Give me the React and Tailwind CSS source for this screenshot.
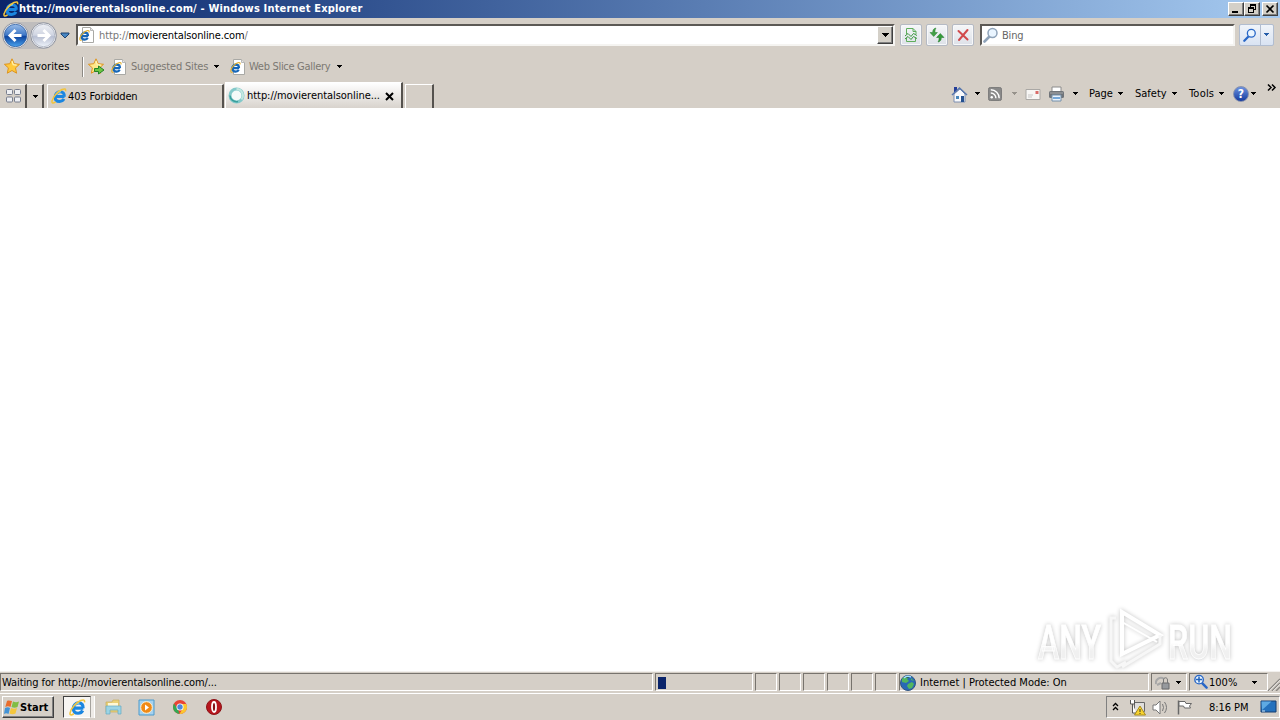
import React from 'react';

const Caret = ({ className = '', color = '#000' }) => (
  <svg className={`shrink-0 ${className}`} width="7" height="4" viewBox="0 0 7 4" shapeRendering="crispEdges">
    <path d="M1 0h5v1H1zM2 1h3v1H2zM3 2h1v1H3z" fill={color} />
  </svg>
);

const IeLogo = ({ size = 16, className = '' }) => (
  <svg className={`shrink-0 ${className}`} width={size} height={size} viewBox="0 0 16 16">
    <path d="M13.500 8.600H5.500M13.300 8.600C13.600 5.600 11.800 3.700 9.200 3.700 6.200 3.700 4.100 5.900 4.100 8.900c0 2.800 1.800 4.500 4.500 4.500 2 0 3.500-.9 4.300-2.500" fill="none" stroke="#1b86e0" strokeWidth="3" />
    <path d="M5 6.400C6 4.600 7.700 3.600 9.800 3.800" fill="none" stroke="#7dd4fb" strokeWidth="1.400" />
    <path d="M4.600 13.900C1.800 15.700.5 15.200 1.100 12.800 2 8.800 6.500 3.500 11 1.500c2.800-1.200 4.100-.6 3.500 1.700" fill="none" stroke="#f2c43c" strokeWidth="1.500" />
  </svg>
);

const PageIcon = ({ className = '' }) => (
  <svg className={`shrink-0 ${className}`} width="15" height="16" viewBox="0 0 15 16">
    <path d="M3.500.5h8l3 3v12h-11z" fill="#fff" stroke="#a9a9a5" />
    <path d="M11.500.5v3h3" fill="#e6e6e6" stroke="#b8b8b8" />
    <path d="M9.200 9.200H2.800M9 9c0-2-1.200-3.300-3.100-3.300S2.300 7.200 2.300 9.300s1.300 3.300 3.400 3.300c1.500 0 2.500-.6 3-1.800" fill="none" stroke="#1767b8" strokeWidth="2.200" />
    <path d="M2.600 13C-.2 14.300.5 10.500 2.700 7.700 4.500 5.300 7 3.700 8.800 3.500c1.300-.1 1.600.8 1 2" fill="none" stroke="#e5b02c" strokeWidth="1.100" />
  </svg>
);

const Star = ({ add, className = '' }) => (
  <svg className={`shrink-0 ${className}`} width="17" height="17" viewBox="0 0 17 17">
    <path d="M8 .8l2.200 4.900 5.300.6-4 3.600 1.100 5.300L8 12.500l-4.700 2.700 1.100-5.300-4-3.600 5.400-.6z" fill={add ? '#fde98a' : '#ffc93c'} stroke="#dd9420" />
    <path d="M8 3l1.200 3.700 3.500.5" fill="none" stroke="#fff3b4" strokeWidth="1.200" />
    {add && <path d="M6.500 10.500h4V8l5.500 4-5.500 4v-2.500h-4z" fill="#6cc643" stroke="#248324" />}
  </svg>
);

const NavCircle = ({ back }) => (
  <svg className="shrink-0" width="27" height="27" viewBox="0 0 27 27">
    <defs>
      <linearGradient id={back ? 'backFill' : 'forwardFill'} x1="0" y1="0" x2="0" y2="1">
        <stop offset="0" stopColor={back ? '#9bbde8' : '#eef0f5'} />
        <stop offset=".48" stopColor={back ? '#3f78c7' : '#d0d5e2'} />
        <stop offset=".55" stopColor={back ? '#0d449f' : '#b9c0d3'} />
        <stop offset="1" stopColor={back ? '#4ba4ee' : '#eef3fa'} />
      </linearGradient>
    </defs>
    <circle cx="13.500" cy="13.500" r="12.700" fill="#f4f4f5" stroke="#7b8191" strokeWidth=".8" />
    <circle cx="13.500" cy="13.500" r="11.200" fill={back ? 'url(#backFill)' : 'url(#forwardFill)'} stroke={back ? '#23539b' : '#a2a9b9'} strokeWidth=".7" />
    <path
      d={back ? 'M13.500 8L8 13.500l5.500 5.500M8.500 13.500H19.500' : 'M13.500 8l5.500 5.500-5.500 5.500M18.500 13.500H7.500'}
      fill="none"
      stroke="#fff"
      strokeWidth="3"
    />
  </svg>
);

const Magnifier = ({ size = 16, color = '#2867c7', lens = '#eaf5ff', flip }) => (
  <svg className={flip ? 'shrink-0 -scale-x-100' : 'shrink-0'} width={size} height={size} viewBox="0 0 16 16">
    <path d="M6.500 9.500L1.500 14.500" stroke={color} strokeWidth="2.600" strokeLinecap="round" />
    <circle cx="9.500" cy="6" r="4.500" fill={lens} stroke={color} strokeWidth="1.500" />
  </svg>
);

const ToolButton = ({ children, className = '' }) => (
  <div className={`flex h-[22px] w-[22px] shrink-0 items-center justify-center rounded-[2px] border border-[#b5bac4] bg-gradient-to-b from-[#f5f6f8] to-[#dde1e8] shadow-[inset_0_0_0_1px_#f7f8fa] ${className}`}>
    {children}
  </div>
);

const WindowButton = ({ children, className = '' }) => (
  <div className={`flex h-[14px] w-4 shrink-0 items-center justify-center border border-t-white border-r-[#404040] border-b-[#404040] border-l-white bg-[#d4d0c8] shadow-[inset_-1px_-1px_0_#808080] ${className}`}>
    {children}
  </div>
);

const TitleBar = () => (
  <header className="flex h-[18px] items-center bg-gradient-to-r from-[#0a246a] to-[#a6caf0] pr-[2px] pl-[3px]">
    <IeLogo />
    <span className="pt-[1px] text-[11px] font-bold tracking-[0.18px] text-white">http://movierentalsonline.com/ - Windows Internet Explorer</span>
    <WindowButton className="ml-auto">
      <svg width="12" height="10" shapeRendering="crispEdges"><path d="M2 7h6v2H2z" /></svg>
    </WindowButton>
    <WindowButton>
      <svg width="12" height="10" viewBox="0 0 12 10" shapeRendering="crispEdges">
        <path d="M4 0h6v6H8V5h1V2H5v1H4zM2 3h6v6H2zM3 5v3h4V5z" fillRule="evenodd" />
      </svg>
    </WindowButton>
    <WindowButton className="ml-[2px]">
      <svg width="12" height="10" viewBox="0 0 12 10"><path d="M2.500 1.500l7 7M9.500 1.500l-7 7" stroke="#000" strokeWidth="1.700" /></svg>
    </WindowButton>
  </header>
);

const AddressRow = () => (
  <div className="flex h-[35px] items-center pr-[6px] pl-[2px]">
    <div className="flex shrink-0 gap-[1px] rounded-full bg-[#bfbdbd]">
      <NavCircle back />
      <NavCircle />
    </div>
    <svg className="ml-[3px] shrink-0" width="10" height="7" viewBox="0 0 10 7">
      <path d="M1 1h8v1L5 6 1 2z" fill="#4786c2" stroke="#1e436f" />
    </svg>
    <div className="ml-[6px] flex h-[22px] w-[819px] shrink-0 items-center border-2 border-t-[#5c5955] border-r-[#f5f4f1] border-b-[#f5f4f1] border-l-[#5c5955] bg-white">
      <PageIcon className="ml-[1px]" />
      <span className="ml-[5px] pt-[2px] text-[11px] tracking-[-0.13px]"><span className="text-[#777]">http://</span>movierentalsonline.com<span className="text-[#777]">/</span></span>
      <div className="ml-auto flex h-[18px] w-4 items-center justify-center border border-t-white border-r-[#404040] border-b-[#404040] border-l-white bg-[#d4d0c8] shadow-[inset_-1px_-1px_0_#808080]">
        <svg width="7" height="4" viewBox="0 0 7 4" shapeRendering="crispEdges"><path d="M0 0h7v1H0zM1 1h5v1H1zM2 2h3v1H2zM3 3h1v1H3z" /></svg>
      </div>
    </div>
    <ToolButton className="ml-[5px]">
      <svg width="16" height="16" viewBox="0 0 16 16" fill="none">
        <path d="M3.500 7V1.500H10l3 3V7M3.500 11v3.500h9V11M10 1.500v3h3" stroke="#5fae5c" />
        <path d="M2 9l3-2.500 3 3 2.500-3L14 8.500M2 12l3-2.500 3 3 2.500-3 3.500 2" stroke="#38953b" />
      </svg>
    </ToolButton>
    <ToolButton className="ml-1">
      <svg width="16" height="16" viewBox="0 0 16 16">
        <path d="M7 1C4.500 1.500 3.700 3 3.700 5.500H1l3.700 4 3.700-4H6C6 3.500 6 2.500 7 1z" fill="#43a047" stroke="#288130" strokeWidth=".5" />
        <path d="M9 15c2.500-.5 3.300-2 3.300-4.500H15l-3.700-4-3.700 4H10c0 2 0 3-1 4.500z" fill="#359b38" stroke="#1d7426" strokeWidth=".5" />
      </svg>
    </ToolButton>
    <ToolButton className="ml-1">
      <svg width="14" height="14" viewBox="0 0 14 14"><path d="M2.500 3l9 8.500M11.500 2L3 12" stroke="#d14a4c" strokeWidth="2" strokeLinecap="round" /></svg>
    </ToolButton>
    <div className="ml-[6px] flex h-[22px] w-[255px] shrink-0 items-center border-2 border-t-[#5c5955] border-r-[#f5f4f1] border-b-[#f5f4f1] border-l-[#5c5955] bg-white pl-[1px]">
      <Magnifier color="#8fa3b9" />
      <span className="ml-[3px] pt-[2px] text-[11px] tracking-[-0.2px] text-[#666]">Bing</span>
    </div>
    <div className="ml-1 flex h-[22px] w-[35px] shrink-0 items-center rounded-[2px] border border-[#b1bdd0] bg-gradient-to-b from-[#f0f4fa] to-[#d9e3f2]">
      <div className="flex h-5 w-[21px] items-center justify-center border-r border-[#b1bdd0]"><Magnifier size={14} /></div>
      <Caret className="ml-[2px]" color="#245da9" />
    </div>
  </div>
);

const FavoritesRow = () => (
  <div className="flex h-[28px] items-center pl-1 text-[11px]">
    <Star />
    <span className="ml-[3px] w-[58px] shrink-0 tracking-[0.1px]">Favorites</span>
    <div className="h-5 w-[2px] border-r border-l border-r-white border-l-[#8c8983]" />
    <Star add className="ml-1" />
    <PageIcon className="ml-[6px]" />
    <span className="ml-[5px] w-[82px] shrink-0 pt-[1px] tracking-[-0.18px] whitespace-nowrap text-[#7b7872]">Suggested Sites</span>
    <Caret />
    <PageIcon className="ml-[10px]" />
    <span className="ml-[4px] w-[87px] shrink-0 pt-[1px] tracking-[-0.3px] whitespace-nowrap text-[#7b7872]">Web Slice Gallery</span>
    <Caret />
  </div>
);

const CommandBar = () => (
  <div className="ml-auto flex h-[27px] w-[329px] shrink-0 items-center self-end text-[11px]">
    <svg className="shrink-0" width="17" height="17" viewBox="0 0 17 17">
      <path d="M3 1h3v5H3z" fill="#243d98" />
      <path d="M3 8v8h11V8L9 3z" fill="#f8f9fc" stroke="#7d8eb0" />
      <path d="M1 9l7.500-7L16 9" fill="none" stroke="#5878ae" strokeWidth="1.500" />
      <path d="M10 10h3v6h-3z" fill="#24508f" /><path d="M5 10h3v3H5z" fill="#4887bb" />
    </svg>
    <Caret className="ml-[6px]" />
    <svg className="ml-[7px] shrink-0" width="14" height="14" viewBox="0 0 15 15">
      <rect x=".5" y=".5" width="14" height="14" rx="2" fill="#898989" stroke="#777" />
      <path d="M3 3c5 0 9 4 9 9M3 6.500c3 0 5.500 2.500 5.500 5.500" fill="none" stroke="#fff" strokeWidth="1.500" /><circle cx="4" cy="11" r="1.300" fill="#fff" />
    </svg>
    <Caret className="ml-[9px]" color="#96928b" />
    <svg className="ml-[7px] shrink-0" width="16" height="11" viewBox="0 0 16 11">
      <path d="M1 .5h14v10H1z" fill="#f7f6f4" stroke="#aaa8a5" /><path d="M10.500 2h3v3h-3z" fill="#d96b68" /><path d="M3 6h5M3 8h4" stroke="#c6c5c5" />
    </svg>
    <svg className="ml-[7px] shrink-0" width="17" height="16" viewBox="0 0 17 16">
      <path d="M4 1h9v6H4z" fill="#fff" stroke="#8b8b8b" /><rect x="1" y="5" width="15" height="7" rx="1.500" fill="#707479" />
      <path d="M2 7h13" stroke="#a6a8ab" /><path d="M4 9h9v6H4z" fill="#eaf2fb" stroke="#7490aa" /><path d="M5 11h7v2H5z" fill="#75a7d8" />
    </svg>
    <Caret className="ml-[7px]" />
    <span className="ml-[10px] w-[28px] shrink-0">Page</span>
    <Caret />
    <span className="ml-[11px] w-[36px] shrink-0">Safety</span>
    <Caret />
    <span className="ml-[11px] w-[29px] shrink-0 tracking-[0.2px]">Tools</span>
    <Caret />
    <div className="ml-[8px] flex h-4 w-4 shrink-0 items-center justify-center rounded-full border border-[#8791ad] bg-gradient-to-b from-[#6c91df] to-[#173b9f] text-[12px] font-bold text-white">?</div>
    <Caret className="ml-[1px]" />
    <svg className="mb-[13px] ml-[10px] shrink-0" width="10" height="7" viewBox="0 0 10 7"><path d="M1 .5l3 3-3 3M5 .5l3 3-3 3" fill="none" stroke="#000" strokeWidth="1.500" /></svg>
  </div>
);

const TabRow = () => (
  <div className="flex h-[27px] items-end">
    <div className="flex h-6 w-[27px] shrink-0 items-center border-t border-r-2 border-t-white border-r-[#55524e] pl-[6px]">
      <svg width="17" height="14" viewBox="0 0 17 14" fill="#eeeff3" stroke="#777d8d">
        <rect x=".5" y=".5" width="6" height="5" rx="1" /><rect x="8.500" y=".5" width="6" height="5" rx="1" />
        <rect x=".5" y="8" width="6" height="5" rx="1" /><rect x="8.500" y="8" width="6" height="5" rx="1" />
      </svg>
    </div>
    <div className="flex h-6 w-[17px] shrink-0 items-center justify-center border-t border-r-2 border-t-white border-r-[#55524e] pt-[1px] pl-[1px]"><Caret /></div>
    <div className="ml-[3px] flex h-6 w-[177px] shrink-0 items-center border-t border-r-2 border-l border-t-white border-r-[#55524e] border-l-white pl-[3px] text-[11px]">
      <IeLogo /><span className="ml-[1px] pt-[2px] tracking-[-0.15px]">403 Forbidden</span>
    </div>
    <div className="ml-[1px] flex h-[26px] w-[178px] shrink-0 items-center border-t border-r-2 border-l border-t-white border-r-[#55524e] border-l-white bg-gradient-to-b from-white to-[#d8d3cd] pl-[2px] text-[11px]">
      <svg className="shrink-0" width="17" height="17" viewBox="0 0 17 17" fill="none">
        <circle cx="8.500" cy="8.500" r="6.500" fill="#f4faf9" stroke="#83c9ca" strokeWidth="3" /><path d="M8.500 2a6.500 6.500 0 0 1 5 10.500" stroke="#c4e7e1" strokeWidth="2" /><path d="M2 8.500a6.500 6.500 0 0 0 8 6" stroke="#399f9d" strokeWidth="1.500" />
      </svg>
      <span className="ml-[2px] w-[138px] shrink-0 pt-[2px] tracking-[-0.05px]">http://movierentalsonline...</span>
      <svg className="mt-[2px] shrink-0" width="9" height="9" viewBox="0 0 9 9"><path d="M1 1l7 7M8 1L1 8" stroke="#000" strokeWidth="2" /></svg>
    </div>
    <div className="ml-[2px] h-6 w-[29px] shrink-0 border-t border-r-2 border-l border-t-white border-r-[#55524e] border-l-white" />
    <CommandBar />
  </div>
);

const Watermark = () => (
  <svg className="absolute right-[40px] bottom-[-14px] overflow-visible drop-shadow-[0_0_2px_rgba(0,0,0,0.24)]" width="212" height="80" viewBox="0 0 212 80">
    <defs>
      <linearGradient id="letters" x1="0" y1="0" x2="0" y2="1">
        <stop offset=".5" stopColor="#fff" />
        <stop offset=".65" stopColor="#f0f0f0" />
      </linearGradient>
    </defs>
    <g fill="url(#letters)" stroke="#fff" strokeWidth=".8" fontFamily="Roboto" fontSize="49" fontWeight="500">
      <text x="10" y="54" textLength="63" lengthAdjust="spacingAndGlyphs">ANY</text>
      <text x="140" y="54" textLength="64" lengthAdjust="spacingAndGlyphs">RUN</text>
    </g>
    <g fill="none" stroke="#fff" strokeWidth="4">
      <path d="M94 7v42l38-19z" />
      <path d="M88 13h-5v43l6 6 9-5M94 62l38-23v-9" stroke="#f7f7f7" strokeWidth="3" />
      <path d="M94 17l35 20" strokeWidth="2" />
    </g>
  </svg>
);

const StatusCell = ({ children, className = '' }) => (
  <div className={`flex h-[18px] shrink-0 items-center border border-t-[#77736d] border-r-white border-b-white border-l-[#77736d] ${className}`}>{children}</div>
);

const StatusBar = () => (
  <div className="relative flex h-[22px] gap-[2px] border-t border-t-[#f2f0ed] pt-[1px] text-[11px]">
    <StatusCell className="w-[653px]"><span className="pt-[2px] pl-[1px] tracking-[-0.09px]">Waiting for http://movierentalsonline.com/...</span></StatusCell>
    <StatusCell className="w-[98px] pl-[2px]"><div className="mt-[1px] h-3 w-2 bg-[#0a246a]" /></StatusCell>
    {[0, 1, 2, 3, 4, 5].map((cell) => <StatusCell key={cell} className="w-[22px]" />)}
    <StatusCell className="w-[250px]">
      <svg className="mt-[1px] shrink-0" width="16" height="16" viewBox="0 0 16 16">
        <circle cx="8" cy="8" r="7.500" fill="#2869b5" stroke="#315481" /><path d="M2 4c2-3 5-3 7-2L7 4l2 2-3 2-4-1zM8 9l4-2 2 2-2 4-3 1-2-3zM11 3l3 3-3-1z" fill="#52b65d" /><path d="M4 3c2-2 5-2 7-1" stroke="#a2e1ff" strokeWidth="1.500" />
      </svg>
      <span className="ml-1 pt-[2px]">Internet | Protected Mode: On</span>
    </StatusCell>
    <StatusCell className="w-[36px]">
      <svg className="mt-[1px] ml-[3px] shrink-0" width="16" height="16" viewBox="0 0 16 16" fill="none">
        <path d="M1 9a5 5 0 0 1 8-5M2 10l4-2" stroke="#a7a7a7" strokeWidth="2" /><path d="M7 8h7v6H7z" fill="#96999d" stroke="#6a6b6d" /><path d="M8.500 8V5c0-3 4-3 4 0v3" stroke="#777" />
      </svg>
      <Caret className="mt-[1px] ml-1" />
    </StatusCell>
    <StatusCell className="w-[79px]">
      <div className="relative ml-[3px] flex h-4 w-4">
        <Magnifier size={15} flip />
        <svg className="absolute top-0 left-0" width="15" height="15" viewBox="0 0 15 15"><path d="M3 5.500h6M6 2.500v6" stroke="#2364bb" strokeWidth="1.500" /></svg>
      </div>
      <span className="w-[42px] pt-[2px]">100%</span><Caret className="mt-[1px]" />
    </StatusCell>
    <svg className="absolute right-0 bottom-[2px]" width="13" height="13" viewBox="0 0 13 13" stroke="#8a8782"><path d="M1 13L13 1M5 13l8-8M9 13l4-4" strokeWidth="1.500" /><path d="M2 13L13 2M6 13l7-7" stroke="#fff" strokeWidth=".6" /></svg>
  </div>
);

const Taskbar = () => (
  <footer className="flex h-[27px] items-center border-t border-white pl-[2px] text-[11px]">
    <button className="flex h-[22px] w-[52px] shrink-0 items-center border border-t-white border-r-[#404040] border-b-[#404040] border-l-white shadow-[inset_-1px_-1px_0_#808080]">
      <svg className="ml-[1px] shrink-0" width="16" height="16" viewBox="0 0 16 16">
        <path d="M3 2c2-1 3 0 5 0L6.500 8C5 7 3 7 1.300 8z" fill="#e96d2c" /><path d="M9 2.500c2 1 4 1 6 0L13.500 8c-2 1-4 1-6 0z" fill="#81bd45" />
        <path d="M1 9c2-1 3.500-1 5 0l-1.500 6c-1.500-1-3-1-4.500 0z" fill="#4393d6" /><path d="M7 9c2 1 4 1 6 0l-1.500 5.500c-2 1-4 1-6 0z" fill="#f4c63d" />
      </svg>
      <span className="pt-[1px] font-bold tracking-[0.05px]">Start</span>
    </button>
    <div className="ml-[9px] flex h-[22px] w-[28px] shrink-0 items-center justify-center border border-t-[#404040] border-r-[#a5a29d] border-b-white border-l-[#404040] bg-[#f7f5f2]"><IeLogo size={17} /></div>
    <div className="flex h-[22px] w-[4px] shrink-0 border-r border-white bg-[#eeebe7]" />
    <svg className="ml-[10px] shrink-0" width="17" height="17" viewBox="0 0 17 17">
      <path d="M1 3h6l1-2h6v12H1z" fill="#ead176" stroke="#c8ad5e" strokeWidth=".7" /><path d="M3 4h10v3H3z" fill="#fff8d5" /><path d="M1 7h15v8h-3v-4H5v4H1z" fill="#9bd4e4" stroke="#65abc4" strokeWidth=".7" />
    </svg>
    <svg className="ml-[16px] shrink-0" width="17" height="17" viewBox="0 0 17 17">
      <path d="M1 1h15v15H1z" fill="#a6d2ef" stroke="#4d9bcc" /><circle cx="8.500" cy="8.500" r="5.800" fill="#f08a16" stroke="#fff0cf" /><path d="M7 5.500l4 3-4 3z" fill="#fff" />
    </svg>
    <svg className="ml-[17px] shrink-0" width="16" height="16" viewBox="0 0 16 16">
      <circle cx="8" cy="8" r="7" fill="#e84435" /><path d="M2 4.500l4 6L7.500 15A7 7 0 0 1 2 4.500z" fill="#34a853" /><path d="M8 5h6.300A7 7 0 0 1 7.500 15L11 9z" fill="#fbc72f" /><circle cx="8" cy="8" r="3.500" fill="#fff" /><circle cx="8" cy="8" r="2.700" fill="#4d87db" />
    </svg>
    <svg className="ml-[18px] shrink-0" width="16" height="16" viewBox="0 0 16 16"><circle cx="8" cy="8" r="7.500" fill="#b7161d" stroke="#8d1317" /><ellipse cx="8" cy="8" rx="2" ry="5" fill="#861216" stroke="#fff" strokeWidth="1.800" /></svg>
    <div className="ml-auto flex h-[22px] w-[174px] shrink-0 items-center border border-t-[#808080] border-r-white border-b-white border-l-[#808080]">
      <svg className="mb-[2px] ml-[5px] shrink-0" width="7" height="9" viewBox="0 0 7 9"><path d="M1 4l2.500-2.500L6 4M1 8l2.500-2.500L6 8" fill="none" stroke="#000" strokeWidth="1.300" /></svg>
      <svg className="ml-[10px] shrink-0" width="17" height="17" viewBox="0 0 17 17">
        <path d="M5.500 3.500h10v9h-10z" fill="#e0dfdd" stroke="#676767" /><path d="M1.500 1v4h4V1M3.500 5v9h4" fill="#fff" stroke="#555" /><path d="M11 7l5.500 9h-11z" fill="#f8d32d" stroke="#a88b1e" /><path d="M11 10v3M11 14v1" stroke="#333" />
      </svg>
      <svg className="ml-[6px] shrink-0" width="18" height="17" viewBox="0 0 18 17" stroke="#777"><path d="M1 6h3l4-4v13l-4-4H1z" fill="#fff" /><path d="M10.500 5q2 3.500 0 7M12.500 3q4 5.500 0 11" fill="none" /></svg>
      <svg className="ml-[6px] shrink-0" width="18" height="17" viewBox="0 0 18 17"><path d="M2.500 1.500v14" stroke="#686868" strokeWidth="1.500" /><path d="M3 2.500h6l1 2h5.500l-2 2.500 1 2H8.500l-1-2H3z" fill="#fff" stroke="#686868" /></svg>
      <span className="ml-[15px] w-[51px] shrink-0 pt-[2px] tracking-[-0.05px] whitespace-nowrap">8:16 PM</span>
      <svg className="shrink-0" width="17" height="14" viewBox="0 0 17 14"><path d="M1 1h15v11H1z" fill="#2471bd" stroke="#173e70" /><path d="M1.500 1.500h10L2 10z" fill="#5eaae3" /><path d="M2 11h3" stroke="#d2e8f6" /></svg>
    </div>
  </footer>
);

const App = () => (
  <div className="flex h-[720px] w-[1280px] flex-col overflow-hidden bg-[#d5cfc7] font-['DejaVu_Sans_Condensed','DejaVu_Sans',sans-serif] leading-[14px] text-black">
    <TitleBar />
    <AddressRow />
    <FavoritesRow />
    <TabRow />
    <main className="relative z-10 h-[564px] w-full bg-white"><Watermark /></main>
    <StatusBar />
    <Taskbar />
  </div>
);

export default App;
